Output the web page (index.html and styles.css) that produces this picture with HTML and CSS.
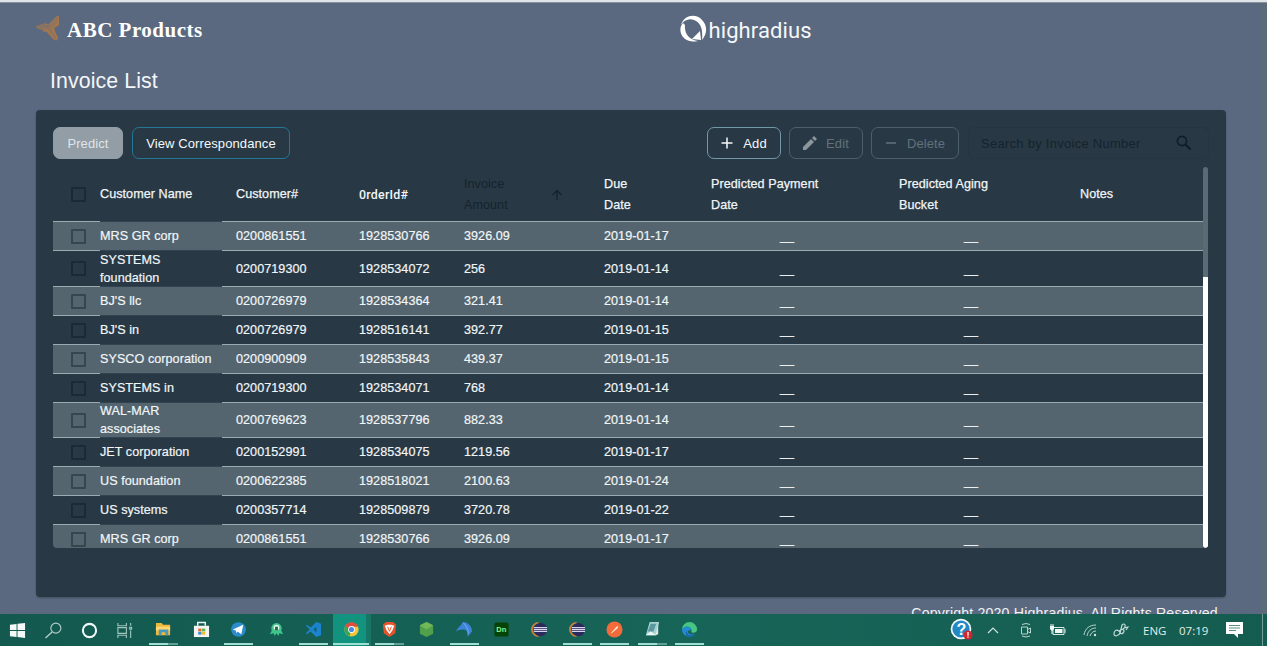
FILE: index.html
```html
<!DOCTYPE html>
<html lang="en">
<head>
<meta charset="utf-8">
<title>Invoice List</title>
<link rel="stylesheet" href="styles.css">
</head>
<body>
<div class="screen">
<div class="browser-edge"></div>
<div class="viewport">
<div class="page">
  <header class="header">
    <div class="brand">
      <svg class="brand-mark" viewBox="0 0 25 27"><path d="M0 11 9 8 13 9 21 1 24 0 24 10 19 13 20 17 23 23 22 26 18 25 11 17 7 17 8 15 2 14z" fill="#a07650"/><path d="M2 11h11l9-9M2 13h12l8-7M14 14l7 10M4 9l10 2" stroke="#6b7079" fill="none" stroke-width=".8"/></svg>
      <span class="brand-name">ABC Products</span>
    </div>
    <svg class="hr-logo" viewBox="0 0 134 32">
      <path d="M1 11C4 1 16-1 22 6c6 6 5 14 0 20C23 15 21 9 14 6 9 4 4 6 1 11z" fill="#fff"/>
      <path d="M1 12c-3 9 5 18 17 15-8-1-14-7-13-16L3 9zM12 25l8-8 1 9z" fill="#fff"/>
      <text x="28.500" y="24" textLength="103" lengthAdjust="spacing" class="hr-word">highradius</text>
    </svg>
  </header>
  <h1 class="title">Invoice List</h1>
  <main class="panel">
    <div class="toolbar">
      <button class="btn predict">Predict</button>
      <button class="btn view">View Correspondance</button>
      <span class="spacer"></span>
      <button class="btn add"><svg viewBox="0 0 12 12"><path d="M6 .5v11M.5 6h11" stroke="currentColor" stroke-width="1.5"/></svg>Add</button>
      <button class="btn edit"><svg class="pencil" viewBox="0 0 14 14"><path d="M0 14v-3l8-8 3 3-8 8zM9 2l2-2 3 3-2 2z" fill="currentColor"/></svg>Edit</button>
      <button class="btn delete"><svg viewBox="0 0 12 12"><path d="M1 6h10" stroke="currentColor" stroke-width="1.5"/></svg>Delete</button>
      <div class="search"><span>Search by Invoice Number</span><svg viewBox="0 0 16 16"><circle cx="6" cy="6" r="4.6" fill="none" stroke="currentColor" stroke-width="1.7"/><path d="m9.5 9.5 5 5" stroke="currentColor" stroke-width="2"/></svg></div>
    </div>
    <div class="table-area">
      <div class="table">
        <div class="row head"><i class="check"></i><b>Customer Name</b><b>Customer#</b><b class="order">0rderId#</b><b class="sorted"><span>Invoice<br>Amount</span><svg viewBox="0 0 12 12"><path d="M6 11V1.5M1.5 6 6 1.5 10.500 6" stroke="currentColor" stroke-width="1.4" fill="none"/></svg></b><b>Due<br>Date</b><b>Predicted Payment<br>Date</b><b>Predicted Aging<br>Bucket</b><b>Notes</b></div>
        <div class="row"><i class="check"></i><b>MRS GR corp</b><b>0200861551</b><b>1928530766</b><b>3926.09</b><b>2019-01-17</b><b class="dash">__</b><b class="dash">__</b><b></b></div>
        <div class="row tall first"><i class="check"></i><b>SYSTEMS<br>foundation</b><b>0200719300</b><b>1928534072</b><b>256</b><b>2019-01-14</b><b class="dash">__</b><b class="dash">__</b><b></b></div>
        <div class="row"><i class="check"></i><b>BJ'S llc</b><b>0200726979</b><b>1928534364</b><b>321.41</b><b>2019-01-14</b><b class="dash">__</b><b class="dash">__</b><b></b></div>
        <div class="row"><i class="check"></i><b>BJ'S in</b><b>0200726979</b><b>1928516141</b><b>392.77</b><b>2019-01-15</b><b class="dash">__</b><b class="dash">__</b><b></b></div>
        <div class="row"><i class="check"></i><b>SYSCO corporation</b><b>0200900909</b><b>1928535843</b><b>439.37</b><b>2019-01-15</b><b class="dash">__</b><b class="dash">__</b><b></b></div>
        <div class="row"><i class="check"></i><b>SYSTEMS in</b><b>0200719300</b><b>1928534071</b><b>768</b><b>2019-01-14</b><b class="dash">__</b><b class="dash">__</b><b></b></div>
        <div class="row tall"><i class="check"></i><b>WAL-MAR<br>associates</b><b>0200769623</b><b>1928537796</b><b>882.33</b><b>2019-01-14</b><b class="dash">__</b><b class="dash">__</b><b></b></div>
        <div class="row"><i class="check"></i><b>JET corporation</b><b>0200152991</b><b>1928534075</b><b>1219.56</b><b>2019-01-17</b><b class="dash">__</b><b class="dash">__</b><b></b></div>
        <div class="row"><i class="check"></i><b>US foundation</b><b>0200622385</b><b>1928518021</b><b>2100.63</b><b>2019-01-24</b><b class="dash">__</b><b class="dash">__</b><b></b></div>
        <div class="row"><i class="check"></i><b>US systems</b><b>0200357714</b><b>1928509879</b><b>3720.78</b><b>2019-01-22</b><b class="dash">__</b><b class="dash">__</b><b></b></div>
        <div class="row"><i class="check"></i><b>MRS GR corp</b><b>0200861551</b><b>1928530766</b><b>3926.09</b><b>2019-01-17</b><b class="dash">__</b><b class="dash">__</b><b></b></div>
      </div>
      <div class="scroll-track"><div class="scroll-thumb"></div></div>
    </div>
  </main>
  <footer class="copyright">Copyright 2020 Highradius. All Rights Reserved.</footer>
</div>
<div class="page-scroll"></div>
</div>
<nav class="taskbar">
  <div class="system">
    <span><svg viewBox="0 0 18 18"><path d="M1 3 8 2v6.500H1zM9 1.900 17 1v7.500H9zM1 9.500h7V16l-7-1zM9 9.500h8V17l-8-1z" fill="#f4f9f8"/></svg></span>
    <span><svg viewBox="0 0 18 18"><circle cx="11.500" cy="6.500" r="5.300" fill="none" stroke="#b5d0cb" stroke-width="1.200"/><path d="m7.500 10.500-7 6.500" stroke="#b5d0cb" stroke-width="1.400"/></svg></span>
    <span><svg viewBox="0 0 18 18"><circle cx="9" cy="9" r="7" fill="none" stroke="#eef8f6" stroke-width="2.200"/></svg></span>
    <span><svg viewBox="0 0 18 18"><path d="M2 1v3h9V1M2 17v-3h9v3M2 6h9v6H2zM15.500 1v3M15.500 9v8M14.500 5.500h2v2h-2z" fill="none" stroke="#9fc5bd" stroke-width="1.200"/></svg></span>
  </div>
  <div class="apps">
    <span class="open multi"><svg viewBox="0 0 18 18"><path d="M1 2h6l1.500 2H16v11H1z" fill="#f0b93e"/><path d="M1 6h15v4H1z" fill="#ffd66d"/><path d="M4 15V9h10v6h-3v-3H7v3z" fill="#4b99bd"/></svg></span>
    <span><svg viewBox="0 0 18 18"><path d="M1 5h16v12H1z" fill="#f2f5f2"/><path d="M5 5V1.500h8V5" fill="none" stroke="#eef4f2" stroke-width="1.500"/><path d="M5.500 8H9v3H5.500z" fill="#e4683a"/><path d="M9.500 8H13v3H9.500z" fill="#69b445"/><path d="M5.500 11.500H9v3H5.500z" fill="#3d90d5"/><path d="M9.500 11.500H13v3H9.500z" fill="#f0bd38"/></svg></span>
    <span class="open"><svg viewBox="0 0 18 18"><circle cx="9" cy="9" r="7.800" fill="#2c8bcb"/><path d="m3 9 11-5-2 10-4-3-1 2-1-3z" fill="#fff"/></svg></span>
    <span><svg viewBox="0 0 18 18"><path d="M4 10a5.500 5.500 0 1 1 10 0l2 4-4-1-1 3-2-3-2 3-1-3-4 1z" fill="#40c58b"/><circle cx="9" cy="7" r="3" fill="#e9f7f1"/><path d="M7.500 6h3v4h-3z" fill="#23654f"/></svg></span>
    <span class="open"><svg viewBox="0 0 18 18"><path d="m12 1 5 2v12l-5 2-6-6-4 3-1-1 4-4-4-4 1-1 4 3zM12 6 9 9l3 3z" fill="#1c83cf" fill-rule="evenodd"/></svg></span>
    <span class="open active"><svg viewBox="0 0 18 18"><circle cx="9" cy="9" r="7.500" fill="#f5c638"/><path d="M2.500 5A7.500 7.500 0 0 1 16 6H9L6 11z" fill="#dc4c3f"/><path d="M2.500 5 8 12l-1 4A7.500 7.500 0 0 1 2.500 5z" fill="#38a65a"/><circle cx="9" cy="9" r="3.600" fill="#fff"/><circle cx="9" cy="9" r="2.700" fill="#4688e4"/></svg></span>
    <span class="open multi"><svg viewBox="0 0 18 18"><path d="m5 1h8l3 3-1 9-6 4-6-4-1-9z" fill="#e3542c"/><path d="m4 5 3-1h4l3 1-2 5-3 4-3-4z" fill="#fff"/><path d="m7 6 2 5 2-5" stroke="#e3542c" fill="none"/></svg></span>
    <span><svg viewBox="0 0 18 18"><path d="m9 1 7 3.500v9L9 17l-7-3.500v-9z" fill="#51a04b"/><path d="m9 1 7 3.500L9 9 2 4.500z" fill="#70b858"/></svg></span>
    <span class="open"><svg viewBox="0 0 18 18"><path d="M0 11C3 5 6 5 7 1c6 0 10 5 10 10l-5 6c1-4 0-7-3-8-3 0-6 0-9 2z" fill="#3d84da"/><path d="M8 2c2 3 5 5 5 12" stroke="#75aef0" fill="none"/></svg></span>
    <span><svg viewBox="0 0 18 18"><rect x="1.500" y="1.500" width="15" height="15" rx="2" fill="#064307"/><text x="3.500" y="11.500" class="dn">Dn</text></svg></span>
    <span><svg viewBox="0 0 18 18"><path d="M8 2a7 7 0 0 0 0 14" fill="none" stroke="#c87f3e" stroke-width="2"/><circle cx="10" cy="9" r="7" fill="#2d285e"/><path d="M3 7h14M3 9h14M3 11h14" stroke="#d7d5eb" stroke-width="1.300"/></svg></span>
    <span class="open"><svg viewBox="0 0 18 18"><path d="M8 2a7 7 0 0 0 0 14" fill="none" stroke="#c87f3e" stroke-width="2"/><circle cx="10" cy="9" r="7" fill="#2d285e"/><path d="M3 7h14M3 9h14M3 11h14" stroke="#d7d5eb" stroke-width="1.300"/></svg></span>
    <span class="open"><svg viewBox="0 0 18 18"><circle cx="9" cy="9" r="8.500" fill="#f36b3a"/><path d="m5 13 6-7 2-1-1 3-6 5z" fill="#fbe0d4"/></svg></span>
    <span class="open multi"><svg viewBox="0 0 18 18"><path d="M6 1h10l-3 14H2z" fill="#a9d2d6"/><path d="M7 3h6l-3 8H4z" fill="#5a979e"/><path d="m2 15 5-4 6 4z" fill="#edf7f6"/><path d="m15 4-3 11 3-1z" fill="#e7e7e3"/></svg></span>
    <span class="open"><svg viewBox="0 0 18 18"><path d="M1 9a8 8 0 0 1 16 0c0 4-6 4-6 2 1-6-8-6-10-2z" fill="#46c681"/><path d="M1 9c2-5 10-4 10 1-6-2-5 6 4 4A8 8 0 0 1 1 9z" fill="#228cd3"/><path d="M6 10c0 6 5 6 9 4-5 5-12 3-9-4z" fill="#1760a8"/></svg></span>
  </div>
  <div class="tray">
    <svg class="help" viewBox="0 0 24 24"><circle cx="11" cy="11" r="10.300" fill="#f1f9fc"/><circle cx="11" cy="11" r="8.600" fill="#2188c4"/><text x="6.500" y="17" class="q">?</text><circle cx="18" cy="17" r="4.500" fill="#d1262e"/><path d="M18 14v3.800M18 18.600v1.200" stroke="#fff" stroke-width="1.300"/></svg>
    <svg class="i-up" viewBox="0 0 12 8"><path d="m1 7 5-5 5 5" fill="none" stroke="#cfe2dd" stroke-width="1.200"/></svg>
    <svg class="i-cam" viewBox="0 0 14 16"><path d="M2.500 5h6v7h-6zM8.500 7.500 11.500 6v5l-3-1.500M3 2.500q4-2 8 0M3 14q4 2 8 0" fill="none" stroke="#bad4ce"/></svg>
    <svg class="i-bat" viewBox="0 0 17 13"><path d="M4 3.500h11v7H4zM16 5v4" fill="none" stroke="#d8e8e4"/><path d="M6 5h7.500v4H6zM1 2h4v3L3 7 1 5z" fill="#f1f8f6"/><path d="M2 0v2M4 0v2M3 6v4" stroke="#f1f8f6"/></svg>
    <svg class="i-wifi" viewBox="0 0 14 14"><path d="M1 12C2 5 7 2 13 2M4 13c1-5 4-8 9-8M7 13c1-3 3-5 6-5" fill="none" stroke="#b9d4cd"/><circle cx="12" cy="12" r="1.200" fill="#d6e6e2"/></svg>
    <svg class="i-pen" viewBox="0 0 16 16"><path d="M6 9C3 7 1 9 1 12s5 2 6-1l2-8q2-2 3 0t-2 4l-4 2q2 4 4 2t0-4M11 6l4-1-2 3" fill="none" stroke="#c2dbd5" stroke-width="1.200"/></svg>
    <span class="lang">ENG</span><span class="clock">07:19</span>
    <svg class="i-chat" viewBox="0 0 17 16"><path d="M0 0h17v12H12v4l-4-4H0z" fill="#fff"/><path d="M3 3.500h11M3 6h11M3 8.500h7" stroke="#5b8b81"/></svg>
    <span class="peek"></span>
  </div>
</nav>
</div>
</body>
</html>
```
FILE: styles.css
```css
*, *::before { box-sizing: border-box; }
body { margin: 0; width: 1268px; height: 647px; overflow: hidden; background: #fff; font-family: "Liberation Sans", Arial, sans-serif; }
svg { display: block; flex: none; }
.screen { width: 1267px; height: 646px; display: flex; flex-direction: column; overflow: hidden; }
.browser-edge { height: 3px; flex: none; background: #dfe5e9; border-bottom: 1px solid #87919d; }
.viewport { height: 611px; flex: none; display: flex; overflow: hidden; background: #5a697f; }
.page { flex: 1; padding: 0 36px; }
.page-scroll { width: 5px; background: #5c6b78; }
.header { height: 57px; display: flex; justify-content: space-between; }
.brand { display: flex; padding-top: 12px; }
.brand-mark { width: 24px; height: 27px; }
.brand-name { margin: 3px 0 0 7px; color: #fff; font: bold 21px/24px "Liberation Serif", serif; letter-spacing: .5px; }
.hr-logo { width: 134px; height: 32px; margin: 11px 412px 0 0; }
.hr-word { fill: #f5f7f9; font: 400 22px Roboto, sans-serif; }
.title { margin: 0; height: 50px; padding: 8px 0 0 14px; color: #f3f6f8; font-size: 21.3px; font-weight: 400; line-height: 27px; letter-spacing: .1px; }
.panel { height: 487px; width: 1190px; padding: 17px 17px 0; border-radius: 4px; background: #283945; box-shadow: 0 1px 2px #43515f; }
.toolbar { display: flex; height: 40px; align-items: flex-start; }
.spacer { flex: 1; }
.btn { height: 32px; padding: 0; border: 1px solid; border-radius: 7px; background: transparent; color: #f5f8fa; font: 13px "Liberation Sans", Arial, sans-serif; letter-spacing: .1px; display: flex; align-items: center; justify-content: center; }
.btn svg { width: 12px; height: 12px; margin-right: 10px; }
.predict { width: 70px; background: #929da6; border-color: #929da6; color: #dfe5e9; margin-right: 9px; }
.view { width: 158px; border-color: #247795; }
.add { width: 74px; border-color: #7299a7; margin-right: 8px; }
.edit { width: 74px; border-color: #4f5f6a; color: #62717b; margin-right: 8px; }
.edit .pencil { width: 14px; height: 14px; color: #8b969d; margin-right: 9px; }
.delete { width: 88px; border-color: #4f5f6a; color: #62717b; margin-right: 9px; }
.search { width: 241px; height: 32px; display: flex; align-items: center; justify-content: space-between; padding: 0 16px 0 12px; border: 1px solid #263641; border-radius: 5px; color: #15232d; font-size: 13px; letter-spacing: .27px; }
.search svg { width: 16px; height: 16px; color: #101d26; }
.table-area { display: flex; height: 381px; overflow: hidden; border-radius: 0 0 4px 4px; }
.table { width: 1150px; color: #f1f5f7; font-size: 12.6px; line-height: 18px; letter-spacing: .05px; }
.row { display: grid; grid-template-columns: 47px 122px 123px 105px 140px 107px 188px 181px 137px; grid-template-rows: 100%; height: 29px; }
.row:nth-child(even) { background: #54656f; }
.row > * { border-bottom: 1px solid #9caab2; min-height: 0; }
.row > b { font-weight: 400; display: flex; align-items: center; padding-left: 14px; -webkit-text-stroke: .2px currentColor; white-space: nowrap; }
.row > b:nth-child(2) { padding-left: 0; border-color: #32444f; }
.row > .dash:nth-child(7) { padding-left: 83px; }
.row > .dash:nth-child(8) { padding-left: 79px; }
.check { display: flex; align-items: center; padding-left: 18px; }
.check::before { content: ""; width: 15px; height: 15px; border: 2px solid #1b2b35; border-radius: 1px; }
.row:nth-child(even) .check::before { border-color: #344650; }
.head { height: 55px; line-height: 21px; }
.head > b { -webkit-text-stroke: .25px currentColor; }
.head .order { font-family: Roboto, sans-serif; font-weight: 500; font-size: 12.4px; letter-spacing: .25px; -webkit-text-stroke: 0; }
.head .sorted { color: #15232d; justify-content: space-between; padding-right: 27px; -webkit-text-stroke: 0; }
.head > b:nth-child(n+5):nth-child(-n+8) { padding-top: 1px; }
.sorted svg { width: 12px; height: 12px; }
.tall { height: 35px; }
.tall.first { height: 36px; }
.scroll-track { width: 5px; background: #5b6b76; border-radius: 3px; overflow: hidden; padding-top: 110px; }
.scroll-thumb { height: 271px; background: #fff; border-radius: 0 0 3px 3px; }
.copyright { padding: 6px 4px 0 0; text-align: right; color: #eef2f5; font-size: 14.2px; line-height: 20px; letter-spacing: .15px; }
.taskbar { height: 32px; flex: none; display: flex; background: linear-gradient(90deg, #13594f, #176558 55%, #155c50); }
.system { display: flex; width: 145px; }
.system span { width: 35.700px; display: flex; align-items: center; justify-content: center; }
.system svg { width: 17px; height: 17px; }
.apps { display: flex; }
.apps span { width: 37.600px; padding: 7px 10px 0; border-bottom: 2px solid transparent; background-clip: padding-box; }
.apps svg { width: 17px; height: 17px; }
.apps .open { border: 0; background: linear-gradient(#a0ded2, #a0ded2) 4px 29px / 29px 2px no-repeat; }
.apps .multi { background: linear-gradient(90deg, #a0ded2 66%, #629f95 66%) 4px 29px / 29px 2px no-repeat; }
.apps .active { background: linear-gradient(#a0ded2, #a0ded2) 0 29px / 36px 2px no-repeat, linear-gradient(90deg, #119380 86%, #177666 86%); }
.dn { fill: #8af58c; font: bold 8px "Liberation Sans", sans-serif; }
.tray { margin-left: auto; display: flex; align-items: center; color: #e1eeeb; }
.help { width: 24px; height: 24px; margin-right: 13px; }
.q { fill: #fff; font: bold 16px "Liberation Sans", sans-serif; }
.i-up { width: 12px; height: 8px; margin-right: 20px; }
.i-cam { width: 14px; height: 16px; margin-right: 16px; }
.i-bat { width: 17px; height: 13px; margin-right: 17px; }
.i-wifi { width: 14px; height: 14px; margin-right: 16px; }
.i-pen { width: 16px; height: 16px; margin-right: 14px; }
.lang, .clock { font: 11.500px "Open Sans", sans-serif; width: 36px; }
.clock { width: 47px; }
.i-chat { width: 17px; height: 16px; margin-right: 19px; }
.peek { width: 5px; height: 32px; border-left: 1px solid #6f9f96; }
```
